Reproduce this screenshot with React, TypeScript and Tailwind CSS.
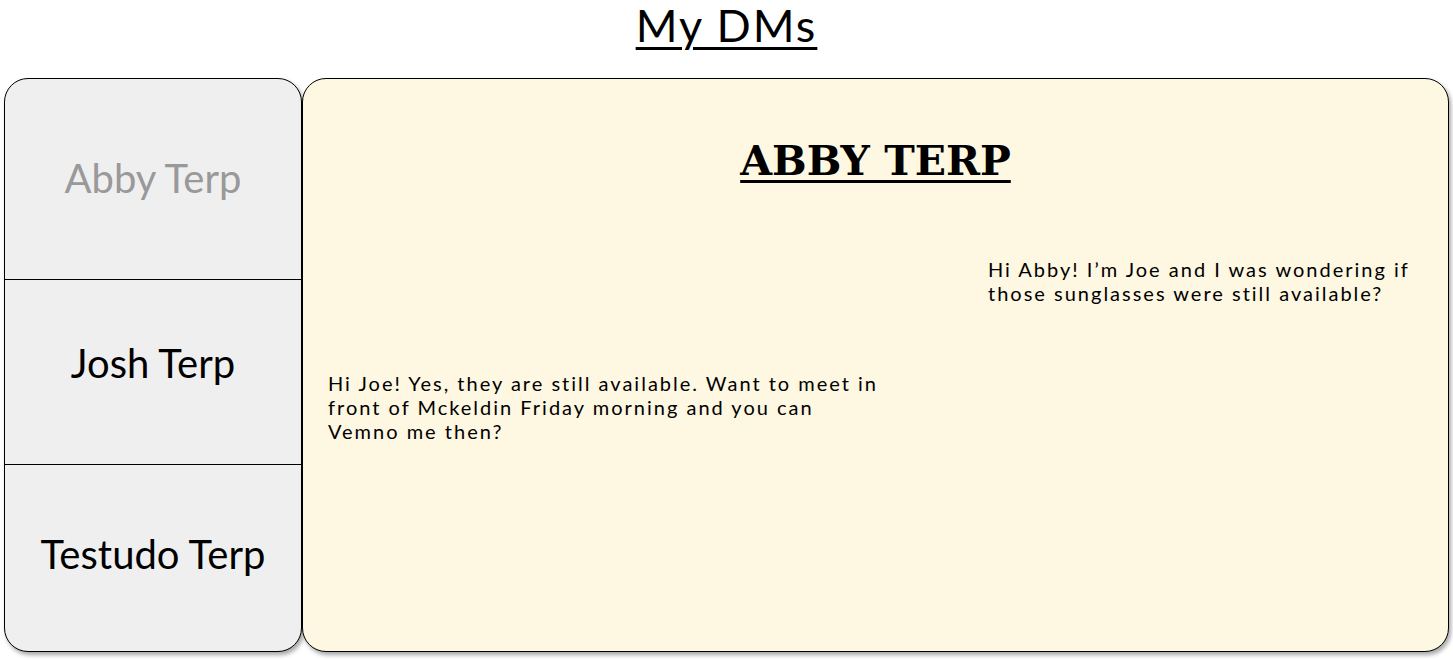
import React from "react";

const sans = "font-['Lato','Open_Sans',sans-serif]";

const contacts = [
  { name: "Abby Terp", active: true, h: "h-[200px] pb-[2px]" },
  { name: "Josh Terp", active: false, h: "h-[185px] pb-[18px]" },
  { name: "Testudo Terp", active: false, h: "flex-1 pb-[8px]" },
];

const App = () => {
  return (
    <div className={`w-[1453px] h-[660px] bg-white flex flex-col ${sans}`}>
      <h1 className="h-[78px] pt-[1px] text-center text-[45px] leading-[48px] text-black underline underline-offset-[5px] decoration-[3px] tracking-[2px]">
        My DMs
      </h1>

      <div className="flex flex-1 px-[4px] pb-[8px]">
        {/* contact list */}
        <div className="w-[298px] flex flex-col rounded-[24px] border border-black bg-[#f0eff0] shadow-[2px_3px_4px_rgba(0,0,0,0.35)] overflow-hidden">
          {contacts.map((c, i) => (
            <div
              key={c.name}
              className={`${c.h} flex items-center justify-center ${i > 0 ? "border-t border-black" : ""}`}
            >
              <span
                className={`text-[40px] leading-[48px] ${c.active ? "text-[#999999]" : "text-black"}`}
              >
                {c.name}
              </span>
            </div>
          ))}
        </div>

        {/* conversation */}
        <div className="flex-1 flex flex-col rounded-[24px] border border-black bg-[#fef7e1] shadow-[2px_3px_4px_rgba(0,0,0,0.35)]">
          <h2 className="mt-[58px] text-center font-['DejaVu_Serif',serif] font-bold text-[41px] leading-[48px] underline underline-offset-[5px] decoration-[3px]">
            ABBY TERP
          </h2>

          <p className="self-end mr-[10px] mt-[72px] w-[450px] text-[20px] leading-[24px] tracking-[2px] text-black">
            Hi Abby! I’m Joe and I was wondering if those sunglasses were still available?
          </p>

          <p className="self-start ml-[25px] mt-[66px] w-[556px] text-[20px] leading-[24px] tracking-[2px] text-black">
            Hi Joe! Yes, they are still available. Want to meet in front of Mckeldin Friday morning and you can Vemno me then?
          </p>
        </div>
      </div>
    </div>
  );
};

export default App;
